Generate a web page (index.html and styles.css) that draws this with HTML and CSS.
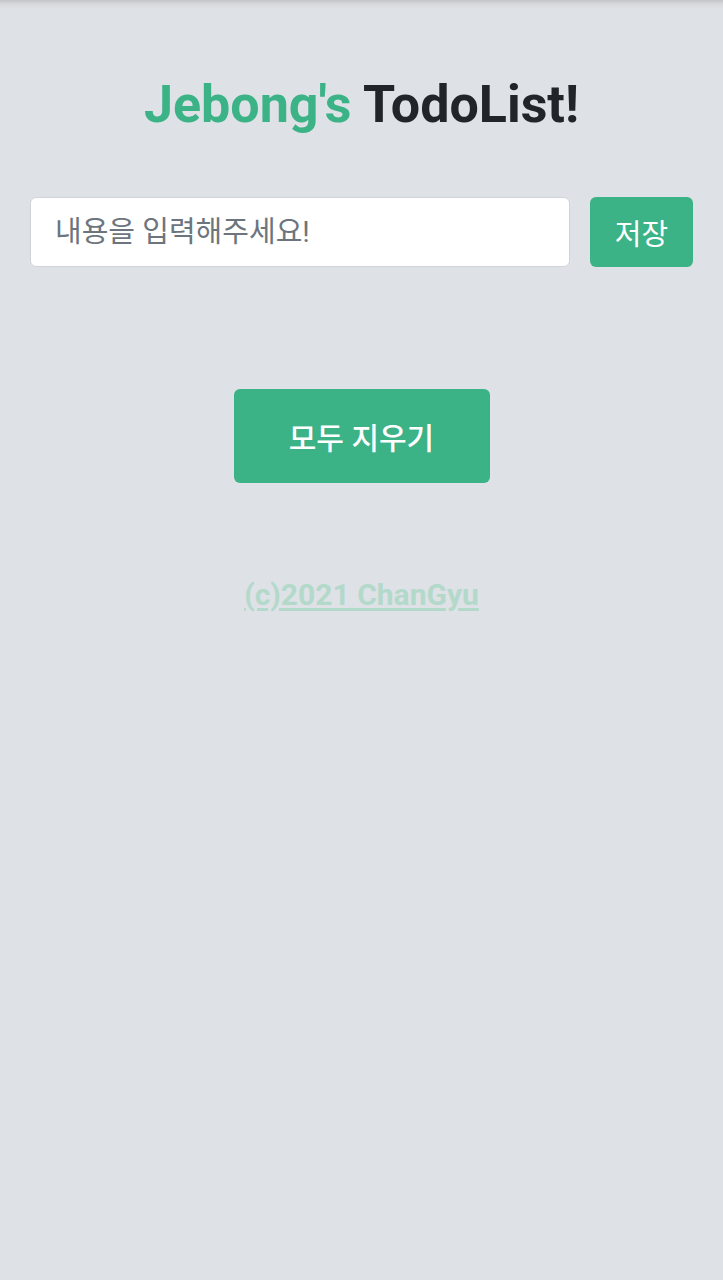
FILE: index.html
```html
<!DOCTYPE html>
<html lang="ko">
<head>
<meta charset="utf-8">
<title>Jebong's TodoList!</title>
<link rel="stylesheet" href="styles.css">
</head>
<body>
<main class="app">
  <h1 class="title"><span class="title-accent">Jebong's</span> TodoList!</h1>
  <form class="todo-form">
    <input class="todo-input" type="text" placeholder="내용을 입력해주세요!">
    <button class="btn btn-save" type="button">저장</button>
  </form>
  <ul class="todo-list"></ul>
  <div class="clear-wrap">
    <button class="btn btn-clear" type="button">모두 지우기</button>
  </div>
  <footer class="footer"><a class="footer-link" href="#">(c)2021 ChanGyu</a></footer>
</main>
</body>
</html>
```

FILE: styles.css
```css
* { box-sizing: border-box; }
html, body { margin: 0; padding: 0; }
body {
  min-height: 1280px;
  background: linear-gradient(to bottom, #c3c5c9 0px, #d6d8dc 4px, #dee1e5 9px) no-repeat, #dee1e5;
  background-size: 100% 10px, auto;
  font-family: Roboto, "Noto Sans CJK KR", sans-serif;
  color: #212529;
}
.app {
  padding: 73px 30px 0;
  display: flex;
  flex-direction: column;
}
.title {
  margin: 0;
  text-align: center;
  font-size: 52px;
  font-weight: 700;
  line-height: 64px;
  color: #212529;
}
.title-accent { color: #3cb287; }
.todo-form {
  margin-top: 60px;
  display: flex;
  gap: 20px;
}
.todo-input {
  flex: 1;
  height: 70px;
  border: 1px solid #ced4da;
  border-radius: 6px;
  background: #fff;
  padding: 0 24px;
  font-family: Roboto, "Noto Sans CJK KR", sans-serif;
  font-size: 29px;
  font-weight: 400;
  color: #495057;
  outline: none;
}
.todo-input::placeholder { color: #6c757d; }
.btn {
  border: none;
  background: #3cb287;
  color: #fff;
  border-radius: 6px;
  font-family: Roboto, "Noto Sans CJK KR", sans-serif;
  cursor: pointer;
}
.btn-save {
  width: 103px;
  height: 70px;
  font-size: 29px;
  font-weight: 400;
}
.todo-list {
  list-style: none;
  margin: 0;
  padding: 0;
  height: 122px;
}
.clear-wrap {
  display: flex;
  justify-content: center;
}
.btn-clear {
  width: 256px;
  height: 94px;
  font-size: 30px;
  font-weight: 500;
}
.footer {
  margin-top: 94px;
  text-align: center;
}
.footer-link {
  font-size: 30px;
  font-weight: 700;
  color: #b3d9cb;
  text-decoration: underline;
  text-underline-offset: 3px;
}
```
